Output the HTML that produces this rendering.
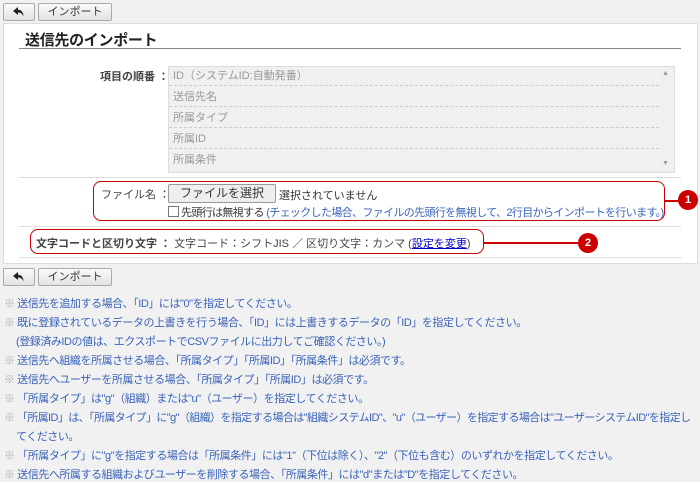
<!DOCTYPE html>
<html><head><meta charset="utf-8"><style>
body{margin:0;width:700px;height:476px;background:#f1f1f1;font-family:"Liberation Sans","Noto Sans CJK JP",sans-serif;font-size:11px;color:#333;position:relative;overflow:hidden}
.a{position:absolute}
.btn{position:absolute;height:16px;border:1px solid #aaa;border-radius:2px;background:linear-gradient(#fafafa,#e2e2e2);font-size:11px;text-align:center;line-height:16px;color:#333}
.panel{left:3px;top:23px;width:693px;height:239px;background:#fff;border:1px solid #ddd}
.row{position:absolute;left:169px;width:490px;height:20px;line-height:20px;color:#999;padding-left:4px;border-bottom:1px dashed #ccc;box-sizing:border-box}
.note{position:absolute;left:4px;color:#3a63b8;font-size:11px;white-space:nowrap;letter-spacing:-0.45px}
.note span{color:#aaa}
.red{position:absolute;border:1.5px solid #c00;border-radius:8px}
.c{position:absolute;width:20px;height:20px;border-radius:50%;background:#c00;color:#fff;text-align:center;line-height:20px;font-size:11px;font-weight:bold}
.ln{position:absolute;height:1.5px;background:#c00}
</style></head><body>
<div class="btn" style="left:3px;top:3px;width:30px"><svg width="12" height="10" viewBox="0 0 12 10" style="margin-top:3px"><path d="M5 0L0 4L5 8V5.5C8 5.5 9.5 7 10.5 9.5C10.5 5 8 2.8 5 2.8Z" fill="#222"/></svg></div>
<div class="btn" style="left:38px;top:3px;width:72px">インポート</div>
<div class="a panel"></div>
<div class="a" style="left:25px;top:29px;font-size:15px;font-weight:bold;color:#222;letter-spacing:-0.3px">送信先のインポート</div>
<div class="a" style="left:19px;top:48px;width:662px;height:1px;background:#888"></div>
<div class="a" style="left:100px;top:68px;font-weight:bold;color:#444">項目の順番 ：</div>
<div class="a" style="left:168px;top:66px;width:505px;height:105px;background:#f0f0f0;border:1px solid #ddd"></div>
<div class="row" style="top:66px">ID（システムID:自動発番）</div>
<div class="row" style="top:87px">送信先名</div>
<div class="row" style="top:108px">所属タイプ</div>
<div class="row" style="top:129px">所属ID</div>
<div class="row" style="top:150px;border:none">所属条件</div>
<div class="a" style="left:662px;top:70px;font-size:7px;color:#999">▲</div>
<div class="a" style="left:662px;top:160px;font-size:7px;color:#999">▼</div>
<div class="a" style="left:19px;top:177px;width:662px;height:1px;background:#ddd"></div>
<div class="a" style="left:101px;top:186px;color:#444">ファイル名 ：</div>
<div class="a" style="left:168px;top:184px;width:106px;height:17px;border:1px solid #999;background:#eee;font-size:12px;line-height:17px;text-align:center;border-radius:2px">ファイルを選択</div>
<div class="a" style="left:279px;top:187px;color:#333">選択されていません</div>
<div class="a" style="left:168px;top:206px;width:9px;height:9px;border:1px solid #777;background:#fff"></div>
<div class="a" style="left:181px;top:204px;white-space:nowrap;letter-spacing:-0.65px">先頭行は無視する <span style="color:#3a63b8">(チェックした場合、ファイルの先頭行を無視して、2行目からインポートを行います。)</span></div>
<div class="red" style="left:93px;top:181px;width:570px;height:38px"></div>
<div class="ln" style="left:664px;top:200px;width:18px"></div>
<div class="c" style="left:678px;top:190px">1</div>
<div class="a" style="left:19px;top:226px;width:662px;height:1px;background:#ddd"></div>
<div class="a" style="left:36px;top:235px;white-space:nowrap;color:#444"><b>文字コードと区切り文字 ：</b> 文字コード：シフトJIS ／ 区切り文字：カンマ (<span style="color:#00c;text-decoration:underline">設定を変更</span>)</div>
<div class="red" style="left:30px;top:229px;width:452px;height:23px"></div>
<div class="ln" style="left:483px;top:242px;width:100px"></div>
<div class="c" style="left:578px;top:233px">2</div>
<div class="a" style="left:19px;top:257px;width:662px;height:1px;background:#ddd"></div>
<div class="btn" style="left:3px;top:268px;width:30px"><svg width="12" height="10" viewBox="0 0 12 10" style="margin-top:3px"><path d="M5 0L0 4L5 8V5.5C8 5.5 9.5 7 10.5 9.5C10.5 5 8 2.8 5 2.8Z" fill="#222"/></svg></div>
<div class="btn" style="left:38px;top:268px;width:72px">インポート</div>
<div class="note" style="top:295px"><span>※</span> 送信先を追加する場合、「ID」には"0"を指定してください。</div>
<div class="note" style="top:314px"><span>※</span> 既に登録されているデータの上書きを行う場合、「ID」には上書きするデータの「ID」を指定してください。</div>
<div class="note" style="top:333px;left:16px">(登録済みIDの値は、エクスポートでCSVファイルに出力してご確認ください。)</div>
<div class="note" style="top:352px"><span>※</span> 送信先へ組織を所属させる場合、「所属タイプ」「所属ID」「所属条件」は必須です。</div>
<div class="note" style="top:371px"><span>※</span> 送信先へユーザーを所属させる場合、「所属タイプ」「所属ID」は必須です。</div>
<div class="note" style="top:390px"><span>※</span> 「所属タイプ」は"g"（組織）または"u"（ユーザー）を指定してください。</div>
<div class="note" style="top:409px;letter-spacing:-0.6px"><span>※</span> 「所属ID」は、「所属タイプ」に"g"（組織）を指定する場合は"組織システムID"、"u"（ユーザー）を指定する場合は"ユーザーシステムID"を指定し</div>
<div class="note" style="top:428px;left:16px">てください。</div>
<div class="note" style="top:447px"><span>※</span> 「所属タイプ」に"g"を指定する場合は「所属条件」には"1"（下位は除く）、"2"（下位も含む）のいずれかを指定してください。</div>
<div class="note" style="top:466px"><span>※</span> 送信先へ所属する組織およびユーザーを削除する場合、「所属条件」には"d"または"D"を指定してください。</div>
</body></html>
